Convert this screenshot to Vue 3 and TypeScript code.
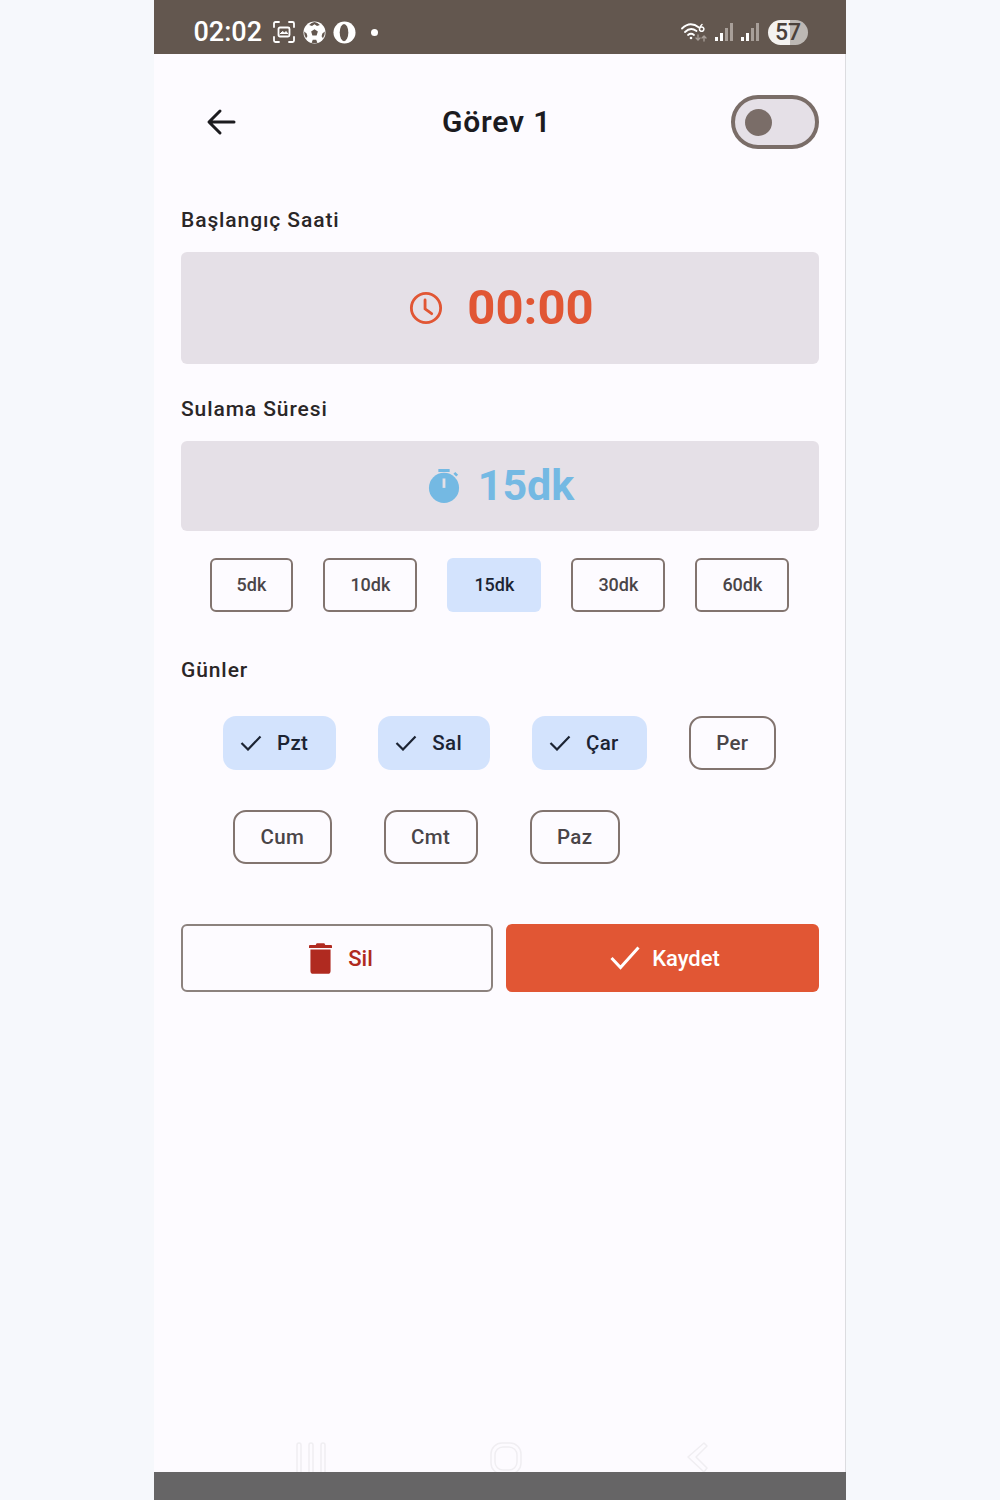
<script setup lang="ts">
import { ref } from 'vue'

defineOptions({
  name: 'TaskEdit',
})

const durations = ['5dk', '10dk', '15dk', '30dk', '60dk']
const selectedDuration = ref('15dk')

const dayRows = [
  [
    { label: 'Pzt', on: true },
    { label: 'Sal', on: true },
    { label: 'Çar', on: true },
    { label: 'Per', on: false },
  ],
  [
    { label: 'Cum', on: false },
    { label: 'Cmt', on: false },
    { label: 'Paz', on: false },
  ],
]
</script>

<template>
  <div class="phone">
    <header class="status-bar">
      <div class="status-left">
        <span class="clock">02:02</span>
        <svg class="status-icon" width="24" height="24" viewBox="0 0 24 24" fill="none" stroke="#fff" stroke-width="1.8" stroke-linecap="round">
          <path d="M2 7V3.5Q2 2 3.5 2H7M17 2h3.5Q22 2 22 3.5V7M2 17v3.5Q2 22 3.5 22H7M17 22h3.5q1.500 0 1.500-1.500V17" />
          <rect x="6.500" y="7.500" width="11" height="9" rx="1.500" />
          <path d="M8 14l2.500-2.500 2 1.500 1.500-1.500 2 2.500" fill="#fff" stroke-width="1" />
        </svg>
        <svg class="status-icon" width="23" height="23" viewBox="0 0 24 24">
          <circle cx="12" cy="12" r="11.500" fill="#fff" />
          <path d="M12 8.500l3.500 2.500-1.300 4H9.800l-1.300-4zM12 1v2.500l-2.600 1.700-3-1A11 11 0 0 1 12 1zM17.600 4.200l-3 1L12 3.500V1a11 11 0 0 1 5.600 3.200zM1.200 11l2.600 2 .8 3-1.400 2A11 11 0 0 1 1.200 11zM22.800 11l-2.600 2-.8 3 1.400 2A11 11 0 0 0 22.800 11zM9 22.600l1.200-3h3.600l1.200 3a11 11 0 0 1-6 0z" fill="#63574f" />
        </svg>
        <svg class="status-icon" width="23" height="23" viewBox="0 0 24 24">
          <circle cx="12" cy="12" r="11.500" fill="#fff" />
          <ellipse cx="11.500" cy="12" rx="4.500" ry="9" fill="#63574f" />
        </svg>
        <span class="status-dot"></span>
      </div>
      <div class="status-right">
        <svg width="27" height="22" viewBox="0 0 27 22" fill="none" stroke="#fff" stroke-linecap="round">
          <path d="M1 7.500Q9-.5 18 6.500" stroke-width="1.800" />
          <path d="M4 11Q9.500 5.500 15.500 10" stroke-width="1.800" />
          <path d="M7 14q3-2.500 6 0" stroke-width="1.800" />
          <circle cx="10" cy="17" r="1.300" fill="#fff" stroke="none" />
          <path d="M21 3.500q-2.500 2-2.500 4.500a2.200 2.200 0 1 0 .3-1" stroke-width="1.500" />
          <path d="M17 14v5m-2-2l2 2 2-2M23 20v-5m-2 2l2-2 2 2" stroke="#a89f99" stroke-width="1.300" />
        </svg>
        <svg width="19" height="20" viewBox="0 0 19 20" class="signal">
          <rect x="0" y="15" width="3" height="4" fill="#fff" />
          <rect x="5" y="11" width="3" height="8" fill="#fff" />
          <rect x="10" y="6" width="3" height="13" fill="#a89f99" />
          <rect x="15" y="1" width="3" height="18" fill="#a89f99" />
        </svg>
        <svg width="19" height="20" viewBox="0 0 19 20" class="signal">
          <rect x="0" y="15" width="3" height="4" fill="#fff" />
          <rect x="5" y="11" width="3" height="8" fill="#fff" />
          <rect x="10" y="6" width="3" height="13" fill="#a89f99" />
          <rect x="15" y="1" width="3" height="18" fill="#a89f99" />
        </svg>
        <span class="battery">57</span>
      </div>
    </header>

    <main class="content">
      <div class="app-bar">
        <button class="back" type="button" aria-label="Geri">
          <svg width="32" height="32" viewBox="0 0 32 32" fill="none" stroke="#1c1b1f" stroke-width="3" stroke-linecap="round" stroke-linejoin="round">
            <path d="M29 16H5M15 5L4 16l11 11" />
          </svg>
        </button>
        <h1 class="title">Görev 1</h1>
        <span class="switch"><span class="switch-thumb"></span></span>
      </div>

      <h2 class="section-label first">Başlangıç Saati</h2>
      <div class="time-box">
        <svg width="34" height="34" viewBox="0 0 36 36" fill="none" stroke="#e15634" stroke-width="3" stroke-linecap="round" stroke-linejoin="round">
          <circle cx="18" cy="18" r="15.500" />
          <path d="M17 9.500V19l7 5" />
        </svg>
        <span class="time-text">00:00</span>
      </div>

      <h2 class="section-label second">Sulama Süresi</h2>
      <div class="duration-box">
        <svg width="32" height="36" viewBox="0 0 34 38">
          <path d="M11 1h12v3H11zM27 6l2-2 3 3-2 2z" fill="#74b9e3" />
          <circle cx="17" cy="21" r="16" fill="#74b9e3" />
          <rect x="15.500" y="11" width="3" height="10" fill="#e5e0e7" />
        </svg>
        <span class="duration-text">15dk</span>
      </div>

      <div class="duration-row">
        <button
          v-for="item in durations"
          :key="item"
          class="duration-chip"
          :class="{ active: item === selectedDuration }"
          type="button"
          @click="selectedDuration = item"
        >
          {{ item }}
        </button>
      </div>

      <h2 class="section-label third">Günler</h2>
      <div class="day-row" v-for="(row, i) in dayRows" :key="i" :class="i === 0 ? 'top' : 'bottom'">
        <button v-for="day in row" :key="day.label" class="day-chip" :class="{ active: day.on }" type="button">
          <svg v-if="day.on" width="22" height="16" viewBox="0 0 22 16" fill="none" stroke="#1c2433" stroke-width="2.200">
            <path d="M1.500 8l6.500 6.500L20.500 1.500" />
          </svg>
          {{ day.label }}
        </button>
      </div>

      <div class="actions">
        <button class="btn-delete" type="button">
          <svg width="23" height="31" viewBox="0 0 24 32">
            <path d="M8 0h8l1 2h6a1 1 0 0 1 1 1v2H0V3a1 1 0 0 1 1-1h6zM1.500 6.500h21V29a3 3 0 0 1-3 3h-15a3 3 0 0 1-3-3z" fill="#b02a20" />
          </svg>
          Sil
        </button>
        <button class="btn-save" type="button">
          <svg width="30" height="24" viewBox="0 0 30 24" fill="none" stroke="#fff" stroke-width="3">
            <path d="M1.500 12l9 9.500L28.500 1.500" />
          </svg>
          Kaydet
        </button>
      </div>
    </main>

    <div class="nav-hints">
      <svg width="30" height="30" viewBox="0 0 30 30" fill="none" stroke="#f0eef2" stroke-width="1.500">
        <rect x="1" y="1" width="4" height="34" rx="2" />
        <rect x="13" y="1" width="4" height="34" rx="2" />
        <rect x="25" y="1" width="4" height="34" rx="2" />
      </svg>
      <svg width="32" height="30" viewBox="0 0 32 30" fill="none" stroke="#f0eef2" stroke-width="1.500">
        <rect x="1" y="1" width="30" height="31" rx="11" />
        <rect x="5" y="5" width="22" height="23" rx="8" />
      </svg>
      <svg width="24" height="30" viewBox="0 0 24 30" fill="none" stroke="#f0eef2" stroke-width="1.500">
        <path d="M19 1l3 3-11 11 11 11-3 4L3 15z" stroke-linejoin="round" />
      </svg>
    </div>
    <div class="bottom-bar"></div>
  </div>
</template>

<style scoped>
.phone {
  display: flex;
  flex-direction: column;
  width: 692px;
  height: 1500px;
  margin: 0 auto;
  box-shadow: inset -1px 0 0 #dcdce0;
  background: #fdfbff;
  font-family: Roboto, 'Liberation Sans', sans-serif;
  color: #1c1b1f;
}

button {
  font-family: inherit;
  cursor: pointer;
}

.status-bar {
  display: flex;
  align-items: center;
  justify-content: space-between;
  box-sizing: border-box;
  height: 54px;
  padding: 10px 38px 0 39.500px;
  background: #63574f;
  color: #fff;
}

.status-left,
.status-right {
  display: flex;
  align-items: center;
}

.clock {
  margin-right: 10px;
  font-size: 27px;
  font-weight: 500;
}

.status-icon {
  margin-right: 7px;
}

.status-dot {
  width: 7px;
  height: 7px;
  margin-left: 8px;
  border-radius: 50%;
  background: #fff;
}

.signal {
  margin-left: 7px;
}

.battery {
  width: 40px;
  height: 25px;
  margin-left: 8px;
  border-radius: 13px;
  background: linear-gradient(90deg, #f4f2f0 0 56%, #bdb8b4 56%);
  color: #4a413b;
  font-size: 23px;
  font-weight: 500;
  line-height: 25px;
  text-align: center;
}

.content {
  padding: 0 27px;
}

.app-bar {
  display: flex;
  align-items: center;
  height: 54px;
  margin-top: 41px;
}

.back {
  display: flex;
  margin-left: 24px;
  padding: 0;
  border: 0;
  background: transparent;
}

.title {
  margin: -2px 0 0 205px;
  font-size: 30px;
  font-weight: 600;
  letter-spacing: 0.8px;
}

.switch {
  display: flex;
  align-items: center;
  box-sizing: border-box;
  width: 88px;
  height: 54px;
  margin-left: auto;
  padding-left: 10px;
  border: 4px solid #7a6d68;
  border-radius: 27px;
  background: #e5e0e7;
}

.switch-thumb {
  width: 27px;
  height: 27px;
  border-radius: 50%;
  background: #7a6d68;
}

.section-label {
  margin: 0;
  font-size: 21px;
  font-weight: 500;
  line-height: 26px;
  letter-spacing: 0.9px;
  color: #2a2627;
}

.section-label.first {
  margin-top: 58px;
}

.section-label.second {
  margin-top: 32px;
}

.section-label.third {
  margin-top: 45px;
}

.time-box,
.duration-box {
  display: flex;
  align-items: center;
  justify-content: center;
  border-radius: 6px;
  background: #e5e0e7;
}

.time-box {
  gap: 24px;
  height: 112px;
  margin-top: 19px;
  padding-left: 3px;
}

.time-text {
  margin-top: -2px;
  font-size: 49px;
  font-weight: 700;
  color: #e15634;
}

.duration-box {
  gap: 18px;
  height: 90px;
  margin-top: 19px;
  padding-left: 2px;
}

.duration-text {
  margin-top: -2px;
  font-size: 43px;
  font-weight: 700;
  color: #74b9e3;
}

.duration-row {
  display: flex;
  justify-content: center;
  gap: 30px;
  margin-top: 27px;
  padding-right: 1px;
}

.duration-chip,
.day-chip {
  display: flex;
  align-items: center;
  justify-content: center;
  box-sizing: border-box;
  height: 54px;
  border: 2px solid #82746f;
  background: transparent;
  color: #4a4548;
  font-weight: 500;
}

.duration-chip {
  padding: 0 25px 1px;
  border-radius: 6px;
  font-size: 18px;
}

.day-chip {
  gap: 15px;
  padding: 0 25.500px;
  border-radius: 13px;
  font-size: 20.500px;
  letter-spacing: 0.3px;
}

.duration-chip.active,
.day-chip.active {
  border-color: transparent;
  background: #d3e3fd;
  color: #1c2433;
}

.day-chip.active {
  padding: 0 26px 0 15px;
}

.day-row {
  display: flex;
}

.day-row.top {
  justify-content: space-evenly;
  margin-top: 33px;
  padding-right: 1px;
}

.day-row.bottom {
  gap: 52px;
  margin-top: 40px;
  padding-left: 52px;
}

.actions {
  display: grid;
  grid-template-columns: 312px 1fr;
  gap: 13px;
  margin-top: 60px;
}

.btn-delete,
.btn-save {
  display: flex;
  align-items: center;
  justify-content: center;
  box-sizing: border-box;
  height: 68px;
  border-radius: 6px;
  font-size: 22px;
  font-weight: 500;
}

.btn-delete {
  gap: 16px;
  padding-left: 14px;
  border: 2px solid #8c827e;
  background: transparent;
  color: #b02a20;
}

.btn-save {
  gap: 12px;
  padding-left: 11px;
  border: 0;
  background: #e15634;
  color: #fff;
}

.nav-hints {
  display: flex;
  justify-content: space-between;
  box-sizing: border-box;
  height: 30px;
  margin-top: auto;
  padding: 0 137px 0 142px;
  overflow: hidden;
}

.bottom-bar {
  flex: none;
  height: 28px;
  background: #666566;
}
</style>

<style>
body {
  background: #f6f8fc;
}
</style>
